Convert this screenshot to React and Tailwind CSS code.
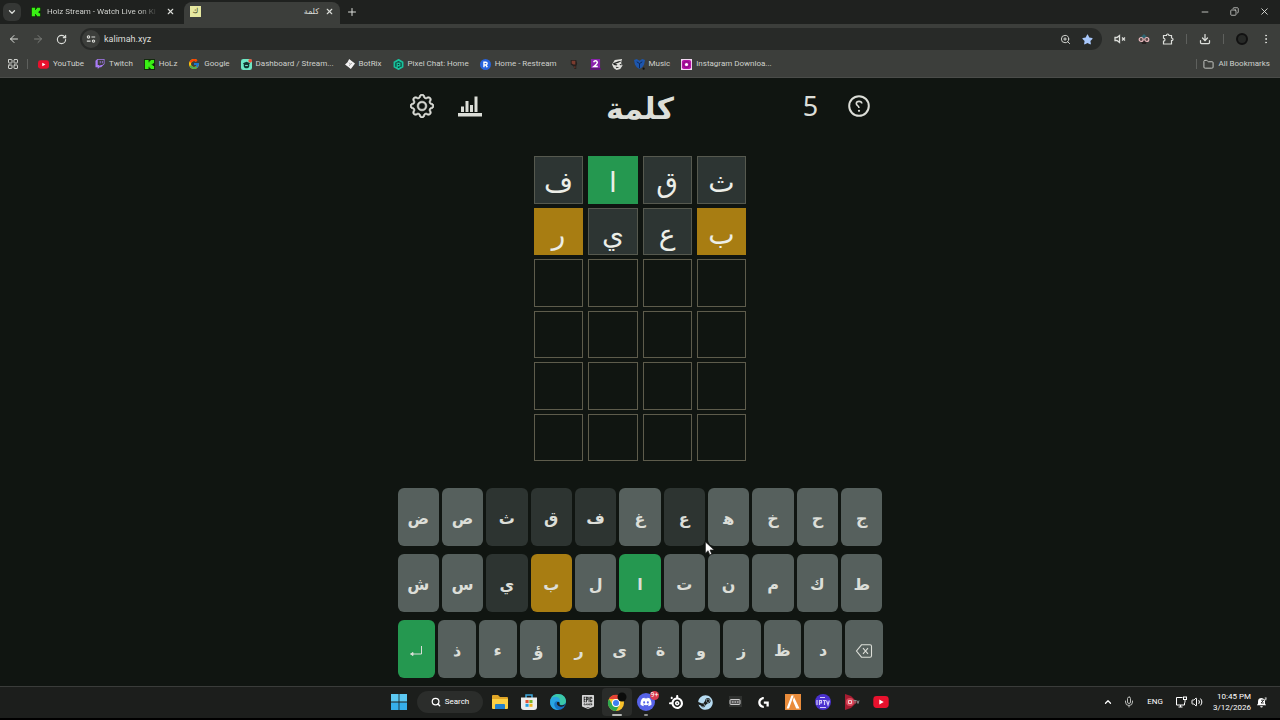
import {
    ArrowLeft, ArrowRight, ChevronDown, ChevronUp, Copy, Download, EllipsisVertical, Folder,
    LayoutGrid, Mic, Minus, Plus, RotateCw, Search, Volume2, X, ZoomIn,
} from 'lucide-react';
import { BsGear } from 'react-icons/bs';
import { FaDiscord, FaSteam, FaStar, FaTwitch } from 'react-icons/fa';
import { FcGoogle } from 'react-icons/fc';
import { SiEpicgames, SiLogitechg, SiSteelseries } from 'react-icons/si';

const guesses = [
    [['ف', 'absent'], ['ا', 'correct'], ['ق', 'absent'], ['ث', 'absent']],
    [['ر', 'present'], ['ي', 'absent'], ['ع', 'absent'], ['ب', 'present']],
];

const keyRows = [
    ['ض', 'ص', 'ث', 'ق', 'ف', 'غ', 'ع', 'ه', 'خ', 'ح', 'ج'],
    ['ش', 'س', 'ي', 'ب', 'ل', 'ا', 'ت', 'ن', 'م', 'ك', 'ط'],
    ['enter', 'ذ', 'ء', 'ؤ', 'ر', 'ى', 'ة', 'و', 'ز', 'ظ', 'د', 'delete'],
];

const used = {
    enter: 'correct', ا: 'correct', ب: 'present', ر: 'present',
    ث: 'absent', ق: 'absent', ف: 'absent', ع: 'absent', ي: 'absent',
};

const tileClass = (status) => {
    switch (status) {
        case 'correct': return 'bg-[#259850] border-[#259850]';
        case 'present': return 'bg-[#a87d12] border-[#a87d12]';
        case 'absent': return 'bg-[#2d3533] border-[#56594f]';
        default: return 'border-[#5e5c4c]';
    }
};

const keyClass = (status) => {
    switch (status) {
        case 'correct': return 'bg-[#259850]';
        case 'present': return 'bg-[#a87d12]';
        case 'absent': return 'bg-[#2d3431]';
        default: return 'bg-[#56605d]';
    }
};

function KickLogo({ className }) {
    return (
        <svg viewBox="0 0 12 12" className={className}>
            <path fill="#122b0c" d="M0 0h12v12H0z" />
            <path fill="#39f014" d="M1 1h4v2.5h1V2.200h1.200V1H11v3.600H9.600v1H8.400v1h1.200v1H11V11H7.200V9.800H6V8.500H5V11H1z" />
        </svg>
    );
}

function YouTubeLogo({ className }) {
    return (
        <svg viewBox="0 0 18 14" className={className}>
            <rect width="18" height="14" rx="4" fill="#e8112d" />
            <path fill="#fff" d="M7 4l5.200 3L7 10z" />
        </svg>
    );
}

function DashboardLogo({ className }) {
    return (
        <svg viewBox="0 0 12 12" className={className}>
            <rect width="12" height="12" rx="2.500" fill="#6ee7c4" />
            <path fill="#12352f" d="M2 4.500l4-1.500 4 1.500-1 1V8a2 2 0 01-2 2H5a2 2 0 01-2-2V5.500z" />
            <path fill="#6ee7c4" d="M4.500 6.500h3v1.200h-3z" />
            <circle cx="10" cy="2" r="2" fill="#ef4e3a" />
        </svg>
    );
}

function BotRixLogo({ className }) {
    return (
        <svg viewBox="0 0 12 12" className={className}>
            <path fill="#f3f3f3" d="M5 0l3 2.500L12 5.500 7 12 4 9.500 0 6.500 3 4z" />
            <path stroke="#777" strokeWidth=".7" d="M4.500 4.500l2 1.500 2-1M5 8.500L6.500 6" fill="none" />
        </svg>
    );
}

function PixelChatLogo({ className }) {
    return (
        <svg viewBox="0 0 12 12" className={className}>
            <path fill="#0c2d28" stroke="#18c29c" strokeWidth="2" d="M6 1l4.400 2.500v5L6 11 1.600 8.500v-5z" />
            <path stroke="#18c29c" strokeWidth="1.500" fill="none" d="M4.500 9.500V4.700h3v2.600h-3" />
        </svg>
    );
}

function RestreamLogo({ className }) {
    return (
        <svg viewBox="0 0 12 12" className={className}>
            <circle cx="6" cy="6" r="6" fill="#2764dd" />
            <path fill="none" stroke="#fff" strokeWidth="1.500" d="M4.300 9V3.500h2a1.500 1.500 0 010 3h-2m2 0L8 9" />
        </svg>
    );
}

function FigureLogo({ className }) {
    return (
        <svg viewBox="0 0 12 12" className={className}>
            <path fill="#26211f" d="M3 1h6l1 4-1 3v3H7l-1-3-3-2z" />
            <path fill="#7c3c2f" d="M4 2h4v4H6L4 5zM7 8h1v2H7z" />
        </svg>
    );
}

function TwoLogo({ className }) {
    return (
        <svg viewBox="0 0 12 12" className={className}>
            <rect x="1" width="10" height="10" fill="#8a22ad" />
            <path fill="#611579" d="M0 10h12v2H0z" />
            <path fill="none" stroke="#fff" strokeWidth="1.600" d="M4 3.500Q4.500 2 6 2t2 1.500Q8 5 4.200 8.200H8.500" />
        </svg>
    );
}

function FaceLogo({ className }) {
    return (
        <svg viewBox="0 0 12 12" className={className}>
            <path fill="#dfdfdb" d="M3 1l8-1-1 4 1.500 3L9 11l-4 1-3-2L0 6z" />
            <path fill="#272927" d="M1 4.500l6-2 4-.5-4 2-3.500 1.200L6 6 5 7 2 6.500zM8 6l3-1-1 2zM4 8.500l4 .5-3 1z" />
        </svg>
    );
}

function MusicLogo({ className }) {
    return (
        <svg viewBox="0 0 12 12" className={className}>
            <path fill="#1d56ad" d="M0 1l3-1 3 2 3-2 3 1-1 5-2 3-3 2-3-2-2-3z" />
            <path stroke="#0b2450" fill="none" d="M3 3l3 2 3-2M6 5v5" />
            <circle cx="10.500" cy="10.500" r="1.200" fill="#111" />
        </svg>
    );
}

function InstagramDownloadLogo({ className }) {
    return (
        <svg viewBox="0 0 12 12" className={className}>
            <path fill="#f4d9f4" d="M0 0h12v12H0z" />
            <rect x="1" y="1" width="10" height="10" rx="2" fill="#b512a5" />
            <rect x="3" y="3" width="6" height="6" rx="2" fill="none" stroke="#7d0b7c" />
            <circle cx="6" cy="6" r="1.700" fill="#fff" />
        </svg>
    );
}

function SiteSettingsIcon({ className }) {
    return (
        <svg viewBox="0 0 12 12" className={className} fill="none" stroke="currentColor" strokeWidth="1.300">
            <circle cx="3" cy="3.500" r="1.400" />
            <path d="M6.500 3.500H11M1 8.500h4.500" />
            <circle cx="9" cy="8.500" r="1.400" />
        </svg>
    );
}

function MuteIcon({ className }) {
    return (
        <svg viewBox="0 0 12 12" className={className} fill="none" stroke="currentColor" strokeWidth="1.300">
            <path d="M1 4.500h2L5.500 2.500v7L3 7.500H1zM8 4.500l3 3M11 4.500l-3 3" />
        </svg>
    );
}

function GlassesIcon({ className }) {
    return (
        <svg viewBox="0 0 12 12" className={className}>
            <path fill="#2d6470" d="M2 5l3-3 1-1 1 1 3 3z" />
            <path fill="#262020" d="M3 7h6l-1 4H4z" />
            <circle cx="3.200" cy="6.500" r="2" fill="#5b4a4a" stroke="#e8b9bd" strokeWidth="1.200" />
            <circle cx="8.800" cy="6.500" r="2" fill="#5b4a4a" stroke="#e8b9bd" strokeWidth="1.200" />
        </svg>
    );
}

function PuzzleIcon({ className }) {
    return (
        <svg viewBox="0 0 12 12" className={className} fill="none" stroke="currentColor" strokeWidth="1.200">
            <path d="M1.500 2.500h3q0-1.500 1.200-1.500T7 2.500h2.500V5Q11 5 11 6.300T9.500 7.500V11h-8V8.200Q3 8 3 6.700T1.500 5.200z" />
        </svg>
    );
}

function StatsIcon() {
    return (
        <svg viewBox="0 0 24 24" className="size-6" fill="currentColor">
            <path d="M0 19h24v3.500H0zM3 12.500h3V18H3zM7.500 7h3v11h-3zM12 11h3v7h-3zM16.500 2.500h3V18h-3z" />
        </svg>
    );
}

function HelpIcon() {
    return (
        <svg viewBox="0 0 24 24" className="size-6" fill="none" stroke="currentColor">
            <circle cx="12" cy="12" r="9.800" strokeWidth="2" />
            <path strokeWidth="1.600" d="M14.800 9.500C14.500 6.700 9.600 6.700 9.300 9.500c0 2.300 2.700 2 2.700 4.500" />
            <circle cx="12" cy="16.800" r="1.100" fill="currentColor" stroke="none" />
        </svg>
    );
}

function EnterIcon() {
    return (
        <svg viewBox="0 0 14 14" className="size-[14px]" fill="none" stroke="currentColor">
            <path d="M12.500 2v8H2.500" />
            <path fill="currentColor" d="M1.500 10l2.500-1.500v3z" />
        </svg>
    );
}

function BackspaceIcon() {
    return (
        <svg viewBox="0 0 18 18" className="size-[18px]" fill="none" stroke="currentColor" strokeWidth="1.100">
            <path d="M6.500 2.800H15q1.500 0 1.500 1.500v9.400q0 1.500-1.500 1.500H6.500L1.500 9zM8 6.200l5 5.600M13 6.200l-5 5.600" />
        </svg>
    );
}

function WindowsLogo() {
    return (
        <svg viewBox="0 0 16 16" className="size-4">
            <path fill="#5cc8f2" d="M0 0h7.600v7.600H0zM8.400 0H16v7.600H8.400z" />
            <path fill="#36aeea" d="M0 8.400h7.600V16H0zM8.400 8.400H16V16H8.400z" />
        </svg>
    );
}

function ExplorerLogo() {
    return (
        <svg viewBox="0 0 18 18" className="size-[18px]">
            <path fill="#e0a526" d="M1 3q0-1 1-1h5l2 2h7q1 0 1 1v4H1z" />
            <path fill="#fbd044" d="M1 6h16v9q0 1-1 1H2q-1 0-1-1z" />
            <path fill="#2181ce" d="M4 16v-4q0-1 1-1h8q1 0 1 1v4z" />
        </svg>
    );
}

function StoreLogo() {
    return (
        <svg viewBox="0 0 18 18" className="size-[18px]">
            <path fill="none" stroke="#3ca8dd" strokeWidth="1.500" d="M6 5V2h6v3" />
            <path fill="#ececec" d="M1 4.500h16V14q0 3-3 3H4q-3 0-3-3z" />
            <path fill="#e75332" d="M5.500 7H8.600v3H5.500z" />
            <path fill="#76b528" d="M9.400 7h3.100v3H9.400z" />
            <path fill="#269fe0" d="M5.500 10.800h3.100v3H5.500z" />
            <path fill="#f2b51d" d="M9.400 10.800h3.100v3H9.400z" />
        </svg>
    );
}

function EdgeLogo() {
    return (
        <svg viewBox="0 0 18 18" className="size-[18px]">
            <circle cx="9" cy="9" r="8" fill="#1672c4" />
            <path fill="#3bc8a8" d="M1.200 8C2 3.500 5 1 9 1c5 0 8 3.500 8 7 0 3-2.500 4-4.500 4-1.500 0-2.500-.5-2-1.200C12 8 9 5.500 6 6 3.500 6.200 2 7 1.200 8z" />
            <path fill="#2aa6e2" d="M1.200 8C2 4.500 5 3 8 4c3 1 4 4 2.500 6.500C9 8 7 7.500 5.500 10 4.500 13 7 16 10 17 4 17.500.5 13 1.200 8z" />
            <path fill="#1c1e1c" d="M8 9.500c1-1.500 3-.5 2.500 1-.5 1.200 1 2 3 1.700 1.500-.2 2.500-.7 3-1.200-1 2.500-3.500 3-5.500 2.500S7.200 11.500 8 9.500z" />
        </svg>
    );
}

function ChromeLogo() {
    return (
        <svg viewBox="0 0 20 20" className="size-5">
            <circle cx="9" cy="11" r="8" fill="#f9c22b" />
            <path fill="#e54335" d="M2 7a8 8 0 0114 0H9z" />
            <path fill="#2fa84f" d="M2 7a8 8 0 007 12l3.500-6L9 15l-3.500-2z" />
            <circle cx="9" cy="11" r="4" fill="#fff" />
            <circle cx="9" cy="11" r="3" fill="#3d7ff0" />
            <circle cx="15" cy="5" r="4.500" fill="#0b0c0b" />
        </svg>
    );
}

function DiscordLogo() {
    return (
        <span className="relative flex size-[18px] items-center justify-center rounded-full bg-[#5663e8] text-white">
            <FaDiscord className="size-3" />
            <span className="absolute -right-1 -top-[2px] rounded-full bg-[#d83a4e] px-px text-[7px] leading-[9px]">9+</span>
        </span>
    );
}

function CapsLogo() {
    return (
        <svg viewBox="0 0 16 16" className="size-4" fill="none">
            <path fill="#303230" d="M2 2h13v11H2z" />
            <rect x="3" y="5.500" width="10" height="5" rx="1" fill="#555" stroke="#c9c9c9" />
            <path stroke="#e0e0e0" d="M5 8h1.500M7.500 8H9M10 8h1.500" />
        </svg>
    );
}

function FiveMLogo() {
    return (
        <svg viewBox="0 0 16 16" className="size-4">
            <path fill="#e98c3b" d="M0 0h16v16H0z" />
            <path fill="#fff" d="M6.500 1.500h2.200L6 9 4 14.500H1.500zM9 3l5.500 11.500h-3.300L7.800 6.500z" />
        </svg>
    );
}

function IptvLogo() {
    return (
        <svg viewBox="0 0 16 16" className="size-4">
            <circle cx="8" cy="8" r="8" fill="#4a31cf" />
            <path fill="none" stroke="#d5cdf8" strokeWidth="1.200" d="M2 6v5M4.500 11V6.500h2v2.300h-2M8 6.500h3M9.500 6.500V11M11.500 6.500L13 11l1.300-4.500M5 3.500h5M5 13.500h6" />
        </svg>
    );
}

function TvPlayerLogo() {
    return (
        <svg viewBox="0 0 16 16" className="size-4">
            <path fill="#a61c31" d="M1 0l6 2 6 6-6 6-6 2z" />
            <circle cx="6" cy="8" r="4" fill="#d9485a" />
            <path fill="none" stroke="#f5c8cd" d="M4.500 6.500h3v3h-3z" />
            <path fill="none" stroke="#8b8b8b" d="M9.500 6.500h3M11 6.500v3M13 6.500l1 3 1-3" />
        </svg>
    );
}

function NetworkIcon({ className }) {
    return (
        <svg viewBox="0 0 12 12" className={className} fill="none" stroke="currentColor">
            <path d="M7.500 1.500h-6v7.500h8V6.500M3.500 11h4M5.500 9v2M10 3.500v3" />
            <rect x="8.500" y="1" width="3" height="2.500" />
        </svg>
    );
}

function SnoozedBellIcon({ className }) {
    return (
        <svg viewBox="0 0 12 12" className={className}>
            <path fill="#fff" d="M1 9l1.200-2V4.500A3.800 3.800 0 016 1q4 .5 3.800 4V7L11 9zM4.500 10h3q-.3 1.500-1.500 1.500T4.500 10z" />
            <path fill="none" stroke="#1c1e1c" d="M5.500 3.500h3l-3 3h3" />
            <path fill="none" stroke="#fff" strokeWidth=".8" d="M9.500 1h2l-2 2h2" />
        </svg>
    );
}

const bookmarks = [
    [YouTubeLogo, 'YouTube', 'h-[9px] w-[11px]'],
    [FaTwitch, 'Twitch', 'size-[10px] text-[#a87bf5]'],
    [KickLogo, 'HoLz', 'size-[11px]'],
    [FcGoogle, 'Google', 'size-3'],
    [DashboardLogo, 'Dashboard / Stream...', 'size-[11px]'],
    [BotRixLogo, 'BotRix', 'size-[10px]'],
    [PixelChatLogo, 'Pixel Chat: Home', 'size-[11px]'],
    [RestreamLogo, 'Home - Restream', 'size-[11px]'],
    [FigureLogo, '', 'size-[11px]'],
    [TwoLogo, '', 'size-[11px]'],
    [FaceLogo, '', 'size-[11px]'],
    [MusicLogo, 'Music', 'size-[11px]'],
    [InstagramDownloadLogo, 'Instagram Downloa...', 'size-[11px]'],
];

function TabStrip() {
    return (
        <div className="flex h-6 items-center bg-[#1f211f] pb-px text-[#dcdeda]">
            <button aria-label="Search tabs" className="ml-[3px] flex h-[18px] w-[18px] items-center justify-center rounded-md bg-[#353735]">
                <ChevronDown className="size-2.5" strokeWidth={3} />
            </button>
            <div className="flex w-[163px] items-center pl-[10px] pr-[9px]">
                <KickLogo className="size-[10px] shrink-0" />
                <span className="ml-[6px] whitespace-nowrap bg-linear-to-r from-[#dcdeda] from-85% to-[#3c3e3b] bg-clip-text text-transparent">
                    Holz Stream - Watch Live on Ki
                </span>
                <button aria-label="Close Holz Stream" className="ml-auto"><X className="size-[9px]" strokeWidth={3} /></button>
            </div>
            <div className="mt-[3px] flex h-[22px] w-[156px] items-center rounded-t-lg bg-[#3c3e3b] px-[6px] pb-[3px]">
                <span className="flex size-[11px] items-center justify-center bg-[#e6e8a0] text-[7px] leading-none text-[#3a3d1f]">ك</span>
                <span className="ml-auto">كلمة</span>
                <button aria-label="Close كلمة" className="ml-[6px]"><X className="size-[9px]" strokeWidth={3} /></button>
            </div>
            <button aria-label="New tab" className="ml-[6px]"><Plus className="size-3" /></button>
            <div className="ml-auto flex items-center gap-5 pr-[10px]">
                <button aria-label="Minimize"><Minus className="size-[10px]" /></button>
                <button aria-label="Restore"><Copy className="size-[9px] -scale-x-100" /></button>
                <button aria-label="Close window"><X className="size-[11px]" /></button>
            </div>
        </div>
    );
}

function AddressBar() {
    return (
        <div className="flex h-[30px] items-center bg-[#3c3e3b] px-2 text-[#dcdeda]">
            <div className="flex w-[72px] items-center gap-3">
                <button aria-label="Back"><ArrowLeft className="size-3" /></button>
                <button aria-label="Forward" className="text-[#7c7e7b]"><ArrowRight className="size-3" /></button>
                <button aria-label="Reload"><RotateCw className="size-[11px]" strokeWidth={2.5} /></button>
            </div>
            <div className="flex h-[22px] flex-1 items-center rounded-full bg-[#282a28] pl-[2px] pr-[9px]">
                <button aria-label="Site information" className="flex size-[18px] items-center justify-center rounded-full bg-[#3c3e3b]">
                    <SiteSettingsIcon className="size-[10px]" />
                </button>
                <input aria-label="Address" defaultValue="kalimah.xyz" className="ml-1 min-w-0 flex-1 bg-transparent text-[9px] outline-none" />
                <button aria-label="Zoom"><ZoomIn className="size-[11px]" /></button>
                <button aria-label="Bookmarked" className="ml-[11px]"><FaStar className="size-[11px] text-[#a8c7fa]" /></button>
            </div>
            <div className="ml-3 flex items-center gap-3">
                <button aria-label="Mute"><MuteIcon className="size-3" /></button>
                <button aria-label="Glasses extension"><GlassesIcon className="size-3" /></button>
                <button aria-label="Extensions"><PuzzleIcon className="size-3" /></button>
                <span className="h-[10px] w-px bg-[#5e605d]" />
                <button aria-label="Downloads"><Download className="size-3" strokeWidth={2.5} /></button>
                <span className="h-[10px] w-px bg-[#5e605d]" />
                <button aria-label="Profile" className="block size-3 rounded-full border-2 border-[#111] bg-[#272927]" />
                <button aria-label="Menu"><EllipsisVertical className="size-3" /></button>
            </div>
        </div>
    );
}

function BookmarksBar() {
    return (
        <nav className="flex h-6 items-center border-b border-[#4a4c49] bg-[#3c3e3b] pb-[3px] pl-[7px] pr-[10px] text-[#cfd1cd]">
            <button aria-label="Apps"><LayoutGrid className="size-3" /></button>
            <span className="mx-2 h-[10px] w-px bg-[#5e605d]" />
            <div className="flex items-center gap-[11px] pl-[2px]">
                {bookmarks.map(([Icon, label, size], index) => (
                    <a key={index} href="#" className="flex items-center gap-1 whitespace-nowrap">
                        <Icon className={size} />
                        {label}
                    </a>
                ))}
            </div>
            <span className="ml-auto mr-[6px] h-[10px] w-px bg-[#5e605d]" />
            <a href="#" className="flex items-center gap-1 whitespace-nowrap"><Folder className="size-[11px]" />All Bookmarks</a>
        </nav>
    );
}

function Header() {
    return (
        <header className="flex h-14 items-center">
            <button aria-label="Settings" className="flex w-12 justify-center">
                <BsGear className="size-6" stroke="currentColor" strokeWidth={0.4} />
            </button>
            <button aria-label="Statistics" className="flex w-12 justify-center"><StatsIcon /></button>
            <h1 className="flex-1 pt-[6px] text-center text-[30px] font-bold leading-10">كلمة</h1>
            <button aria-label="Word length" className="w-12 font-['Noto_Sans',sans-serif] text-[27px]">5</button>
            <button aria-label="Help" className="flex w-12 justify-center"><HelpIcon /></button>
        </header>
    );
}

function Board() {
    return (
        <div className="mx-auto mt-[22px] grid h-[305px] w-[212px] grid-cols-4 grid-rows-6 gap-x-[5px] gap-y-1">
            {Array.from({ length: 24 }, (_, i) => {
                const [letter, status] = guesses[Math.floor(i / 4)]?.[i % 4] ?? [];
                return (
                    <div key={i} className={`flex items-center justify-center border pt-[7px] text-[28px] leading-8 text-[#eceee8] ${tileClass(status)}`}>
                        {letter}
                    </div>
                );
            })}
        </div>
    );
}

function Keyboard() {
    const label = (key) => {
        if (key === 'enter') return <EnterIcon />;
        if (key === 'delete') return <BackspaceIcon />;
        // the joiner keeps heh in its two-eyed form
        return key === 'ه' ? 'ه\u200d' : key;
    };
    return (
        <div className="mt-[27px] flex flex-col gap-2">
            {keyRows.map((row, index) => (
                <div key={index} className="flex gap-[3px]">
                    {row.map((key) => (
                        <button
                            key={key}
                            aria-label={key}
                            className={`flex h-[58px] min-w-0 flex-1 items-center justify-center rounded-md pt-[3px] text-base font-bold ${keyClass(used[key])}`}
                        >
                            {label(key)}
                        </button>
                    ))}
                </div>
            ))}
        </div>
    );
}

function Taskbar() {
    const apps = [
        ['File Explorer', <ExplorerLogo />],
        ['Store', <StoreLogo />],
        ['Edge', <EdgeLogo />],
        ['Epic Games', <SiEpicgames className="size-[14px] text-[#d6d6d6]" />],
        ['Chrome', <ChromeLogo />],
        ['Discord', <DiscordLogo />],
        ['SteelSeries', <SiSteelseries className="size-[14px]" />],
        ['Steam', <FaSteam className="size-[15px] text-[#b7dcf2]" />],
        ['Macro keys', <CapsLogo />],
        ['Logitech G', <SiLogitechg className="size-[11px]" />],
        ['FiveM', <FiveMLogo />],
        ['IPTV', <IptvLogo />],
        ['TV Player', <TvPlayerLogo />],
        ['YouTube', <YouTubeLogo className="h-3 w-4" />],
    ];
    const running = {
        Chrome: 'rounded bg-[#2a2c2a] after:w-[10px] after:bg-[#b5b7b4]',
        Discord: 'after:w-1 after:bg-[#8f918e]',
    };
    return (
        <footer className="grid h-[34px] grid-cols-[1fr_auto_1fr] items-center border-b-2 border-t border-b-black border-t-[#3a3c3a] bg-[#1c1e1c] pb-px text-white">
            <div />
            <div className="flex items-center pl-[7px]">
                <button aria-label="Start" className="mr-[10px]"><WindowsLogo /></button>
                <button className="mr-[2px] flex h-[22px] w-[66px] items-center justify-center gap-1 rounded-full bg-[#2b2d2b]">
                    <Search className="size-[10px]" strokeWidth={3} />Search
                </button>
                <div className="flex w-[411px]">
                    {apps.map(([name, icon]) => (
                        <button
                            key={name}
                            aria-label={name}
                            className={`relative flex h-7 flex-1 items-center justify-center after:absolute after:bottom-0 after:h-[2px] after:rounded-full ${running[name] ?? ''}`}
                        >
                            {icon}
                        </button>
                    ))}
                </div>
            </div>
            <div className="flex items-center justify-end pr-[13px]">
                <button aria-label="Hidden icons"><ChevronUp className="size-[10px]" strokeWidth={3} /></button>
                <Mic className="ml-[10px] size-3 text-[#b9bbb8]" />
                <span className="ml-3">ENG</span>
                <NetworkIcon className="ml-3 size-3" />
                <Volume2 className="ml-1 size-3" />
                <div className="ml-[10px] text-right leading-[11px]">
                    <p>10:45 PM</p>
                    <p>3/12/2026</p>
                </div>
                <SnoozedBellIcon className="ml-[5px] size-[11px]" />
            </div>
        </footer>
    );
}

export default function App() {
    return (
        <div className="flex min-h-screen flex-col bg-[#101511] font-['Roboto','DejaVu_Sans',sans-serif] text-[8px] leading-3">
            <TabStrip />
            <AddressBar />
            <BookmarksBar />
            <main className="mx-auto w-full max-w-[485px] flex-1 pb-2 font-['DejaVu_Sans',sans-serif] text-[#dcded8]">
                <Header />
                <Board />
                <Keyboard />
            </main>
            <Taskbar />
            <svg viewBox="0 0 12 18" className="pointer-events-none absolute left-[705px] top-[541px] h-4 w-[10px]">
                <path fill="#fff" stroke="#222" strokeWidth=".8" d="M.5.500V14l3.200-3 2 5 2.300-1-2-4.800H11z" />
            </svg>
        </div>
    );
}
